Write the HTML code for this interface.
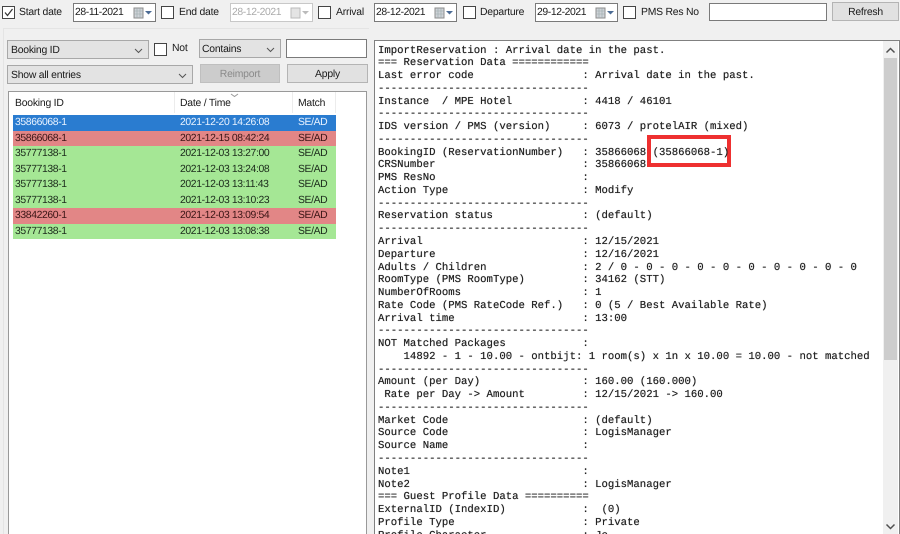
<!DOCTYPE html>
<html><head><meta charset="utf-8"><style>
html,body{margin:0;padding:0;width:900px;height:534px;overflow:hidden;background:#f0f0f0}
body{position:relative;font:10.4px/14px "Liberation Sans",sans-serif;letter-spacing:-.22px;color:#1a1a1a;text-rendering:geometricPrecision;filter:blur(.3px)}
.a{position:absolute;white-space:pre}
.cb{position:absolute;width:11px;height:11px;border:1px solid #444;background:#fff}
.dt{position:absolute;height:17px;background:#fff;border:1px solid #7a7a7a;line-height:18px;padding-left:1px;width:80px;font-size:10.4px;letter-spacing:-.4px}
.dt svg{position:absolute;right:2px;top:2px}
.dd{position:absolute;background:#e3e3e3;border:1px solid #a8a8a8;box-sizing:border-box;line-height:19px;padding-left:3px}
.dd svg{position:absolute;right:5px;top:7px}
.btn{position:absolute;background:#e1e1e1;border:1px solid #b4b4b4;box-sizing:border-box;text-align:center;line-height:19px}
.in{position:absolute;background:#fff;border:1px solid #7a7a7a;box-sizing:border-box}
.row{position:absolute;left:13px;width:323px;height:15.5px;line-height:16px;font-size:10.4px;letter-spacing:-.38px;color:#1b2a1b}
.row span{position:absolute;top:0}
.g{background:#a5e795}.r{background:#e28686;color:#3a1515}.s{background:#2a7cd0;color:#e8f2ff}
#log{position:absolute;left:378px;top:44.5px;font:10.65px/12.76px "Liberation Mono",monospace;letter-spacing:0;color:#222;white-space:pre;margin:0;text-shadow:0 0 .5px #333}
</style></head><body>

<div class="a" style="left:3px;top:28px;width:365px;height:506px;border-top:1px solid #e4e4e4;border-left:1px solid #e4e4e4"></div>

<div class="cb" style="left:2px;top:6px"><svg width="11" height="11" style="display:block"><path d="M2 5.500L4.500 8.500L9.500 2" fill="none" stroke="#333" stroke-width="1.200"/></svg></div>
<div class="a" style="left:19px;top:6px">Start date</div>
<div class="dt" style="left:73px;top:3px">28-11-2021<svg width="20" height="14"><rect x="1" y="2" width="9" height="10" fill="#cfd3d8" stroke="#8d8d8d"/><path d="M1 5H10M1 8H10M4 2V12M7 2V12" stroke="#9aa" stroke-width=".6"/><path d="M12 5h7l-3.500 3.500z" fill="#4b6b94"/></svg></div>
<div class="cb" style="left:161px;top:6px"></div>
<div class="a" style="left:179px;top:6px">End date</div>
<div class="dt" style="left:230px;top:3px;color:#aaa;border-color:#c8c8c8">28-12-2021<svg width="20" height="14"><rect x="1" y="2" width="9" height="10" fill="#e4e4e4" stroke="#bbb"/><path d="M12 5h7l-3.500 3.500z" fill="#bbb"/></svg></div>
<div class="cb" style="left:318px;top:6px"></div>
<div class="a" style="left:336px;top:6px">Arrival</div>
<div class="dt" style="left:374px;top:3px">28-12-2021<svg width="20" height="14"><rect x="1" y="2" width="9" height="10" fill="#cfd3d8" stroke="#8d8d8d"/><path d="M1 5H10M1 8H10M4 2V12M7 2V12" stroke="#9aa" stroke-width=".6"/><path d="M12 5h7l-3.500 3.500z" fill="#4b6b94"/></svg></div>
<div class="cb" style="left:463px;top:6px"></div>
<div class="a" style="left:480px;top:6px">Departure</div>
<div class="dt" style="left:535px;top:3px">29-12-2021<svg width="20" height="14"><rect x="1" y="2" width="9" height="10" fill="#cfd3d8" stroke="#8d8d8d"/><path d="M1 5H10M1 8H10M4 2V12M7 2V12" stroke="#9aa" stroke-width=".6"/><path d="M12 5h7l-3.500 3.500z" fill="#4b6b94"/></svg></div>
<div class="cb" style="left:623px;top:6px"></div>
<div class="a" style="left:641px;top:6px">PMS Res No</div>
<div class="in" style="left:709px;top:3px;width:118px;height:18px"></div>
<div class="btn" style="left:832px;top:2px;width:67px;height:19px">Refresh</div>

<div class="dd" style="left:7px;top:40px;width:142px;height:19px">Booking ID<svg width="9" height="6"><path d="M1 1L4.500 4.500L8 1" fill="none" stroke="#555"/></svg></div>
<div class="cb" style="left:154px;top:43px"></div>
<div class="a" style="left:172px;top:42px">Not</div>
<div class="dd" style="left:199px;top:39px;width:82px;height:19px;padding-left:2px">Contains<svg width="9" height="6"><path d="M1 1L4.500 4.500L8 1" fill="none" stroke="#555"/></svg></div>
<div class="in" style="left:286px;top:39px;width:81px;height:19px"></div>
<div class="dd" style="left:7px;top:65px;width:186px;height:19px">Show all entries<svg width="9" height="6"><path d="M1 1L4.500 4.500L8 1" fill="none" stroke="#555"/></svg></div>
<div class="btn" style="left:200px;top:64px;width:80px;height:19px;background:#ccc;color:#8a8a8a;border-color:#bfbfbf">Reimport</div>
<div class="btn" style="left:287px;top:64px;width:81px;height:19px">Apply</div>

<div class="in" style="left:8px;top:91px;width:359px;height:450px;border-color:#999"></div>
<div class="a" style="left:174px;top:92px;width:1px;height:21px;background:#ececec"></div>
<div class="a" style="left:292px;top:92px;width:1px;height:21px;background:#ececec"></div>
<div class="a" style="left:335px;top:92px;width:1px;height:21px;background:#ececec"></div>
<div class="a" style="left:15px;top:97px">Booking ID</div>
<div class="a" style="left:180px;top:97px">Date / Time</div>
<div class="a" style="left:298px;top:97px">Match</div>
<svg class="a" style="left:230px;top:93px" width="9" height="5"><path d="M1 1L4.500 3.500L8 1" fill="none" stroke="#999"/></svg>

<div class="row s" style="top:115px"><span style="left:2px">35866068-1</span><span style="left:167px">2021-12-20 14:26:08</span><span style="left:285px">SE/AD</span></div>
<div class="row r" style="top:130.500px"><span style="left:2px">35866068-1</span><span style="left:167px">2021-12-15 08:42:24</span><span style="left:285px">SE/AD</span></div>
<div class="row g" style="top:146px"><span style="left:2px">35777138-1</span><span style="left:167px">2021-12-03 13:27:00</span><span style="left:285px">SE/AD</span></div>
<div class="row g" style="top:161.500px"><span style="left:2px">35777138-1</span><span style="left:167px">2021-12-03 13:24:08</span><span style="left:285px">SE/AD</span></div>
<div class="row g" style="top:177px"><span style="left:2px">35777138-1</span><span style="left:167px">2021-12-03 13:11:43</span><span style="left:285px">SE/AD</span></div>
<div class="row g" style="top:192.500px"><span style="left:2px">35777138-1</span><span style="left:167px">2021-12-03 13:10:23</span><span style="left:285px">SE/AD</span></div>
<div class="row r" style="top:208px"><span style="left:2px">33842260-1</span><span style="left:167px">2021-12-03 13:09:54</span><span style="left:285px">SE/AD</span></div>
<div class="row g" style="top:223.500px"><span style="left:2px">35777138-1</span><span style="left:167px">2021-12-03 13:08:38</span><span style="left:285px">SE/AD</span></div>

<div class="in" style="left:374px;top:40px;width:526px;height:500px;border-color:#808080"></div>
<div class="a" style="left:647px;top:135px;width:84px;height:32px;box-sizing:border-box;border:4.500px solid #ee3030"></div>
<pre id="log">ImportReservation : Arrival date in the past.
=== Reservation Data ============
Last error code                 : Arrival date in the past.
---------------------------------
Instance  / MPE Hotel           : 4418 / 46101
---------------------------------
IDS version / PMS (version)     : 6073 / protelAIR (mixed)
---------------------------------
BookingID (ReservationNumber)   : 35866068 (35866068-1)
CRSNumber                       : 35866068
PMS ResNo                       :
Action Type                     : Modify
---------------------------------
Reservation status              : (default)
---------------------------------
Arrival                         : 12/15/2021
Departure                       : 12/16/2021
Adults / Children               : 2 / 0 - 0 - 0 - 0 - 0 - 0 - 0 - 0 - 0 - 0
RoomType (PMS RoomType)         : 34162 (STT)
NumberOfRooms                   : 1
Rate Code (PMS RateCode Ref.)   : 0 (5 / Best Available Rate)
Arrival time                    : 13:00
---------------------------------
NOT Matched Packages            :
    14892 - 1 - 10.00 - ontbijt: 1 room(s) x 1n x 10.00 = 10.00 - not matched
---------------------------------
Amount (per Day)                : 160.00 (160.000)
 Rate per Day -&gt; Amount         : 12/15/2021 -&gt; 160.00
---------------------------------
Market Code                     : (default)
Source Code                     : LogisManager
Source Name                     :
---------------------------------
Note1                           :
Note2                           : LogisManager
=== Guest Profile Data ==========
ExternalID (IndexID)            :  (0)
Profile Type                    : Private
Profile Character               : Jc</pre>

<div class="a" style="left:883px;top:41px;width:15px;height:493px;background:#f0f0f0"></div>
<div class="a" style="left:884px;top:58px;width:13px;height:302px;background:#cdcdcd"></div>
<svg class="a" style="left:885px;top:47px" width="11" height="7"><path d="M1.500 5.500L5.500 1.500L9.500 5.500" fill="none" stroke="#505050" stroke-width="1.500"/></svg>
<svg class="a" style="left:885px;top:523px" width="11" height="7"><path d="M1.500 1.500L5.500 5.500L9.500 1.500" fill="none" stroke="#505050" stroke-width="1.500"/></svg>
</body></html>
